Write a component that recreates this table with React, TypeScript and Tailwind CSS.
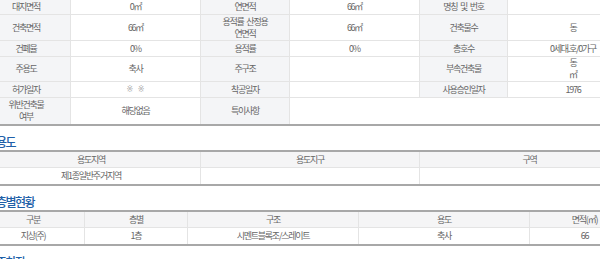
import type { ReactNode } from 'react'

const FONT = { fontFamily: '"Noto Sans CJK KR", "Noto Sans", sans-serif' }

function Th({ children, className = '' }: { children?: ReactNode; className?: string }) {
  return (
    <div
      className={`flex items-center justify-center border-r border-[#e4e4e4] bg-[#f4f5f7] text-center leading-[12px] ${className}`}
    >
      {children}
    </div>
  )
}

function Td({ children, className = '' }: { children?: ReactNode; className?: string }) {
  return (
    <div
      className={`flex items-center justify-center border-r border-[#e4e4e4] bg-white text-center leading-[12px] ${className}`}
    >
      {children}
    </div>
  )
}

function Heading({ title }: { title: string }) {
  return (
    <h3 className="h-[24px] pt-[9px] pl-[14px] text-[12px] leading-[14px] font-medium tracking-[-1.5px] text-[#2060a8]">
      {title}
    </h3>
  )
}

const rows: { h: string; cells: ReactNode[] }[] = [
  { h: 'h-[15px]', cells: ['대지면적', '0㎡', '연면적', '66㎡', '명칭 및 번호', ''] },
  {
    h: 'h-[26px]',
    cells: [
      '건축면적',
      '66㎡',
      <span key="a">
        용적률 산정용
        <br />
        연면적
      </span>,
      '66㎡',
      '건축물수',
      '동',
    ],
  },
  { h: 'h-[16px]', cells: ['건폐율', '0%', '용적률', '0%', '총호수', '0세대.호/0가구'] },
  {
    h: 'h-[25px]',
    cells: [
      '주용도',
      '축사',
      '주구조',
      '',
      '부속건축물',
      <span key="b">
        동
        <br />
        ㎡
      </span>,
    ],
  },
  {
    h: 'h-[16px]',
    cells: [
      '허가일자',
      <span key="c" className="font-['DejaVu_Sans'] text-[8px] tracking-normal text-[#b0b0b0]">
        ※ ※
      </span>,
      '착공일자',
      '',
      '사용승인일자',
      '1976',
    ],
  },
]

export default function App() {
  return (
    <div className="h-[259px] w-[600px] overflow-hidden bg-white" style={FONT}>
      <div className="-ml-[18px] w-[657px] text-[9px] tracking-[-1.25px] text-[#666] [word-spacing:2px]">
        {/* 기본 개요 */}
        <div className="border-b-2 border-[#a8a8a8]">
          {rows.map((r, i) => (
            <div
              key={i}
              className={`grid grid-cols-[89px_130px_89px_130px_88px_131px] border-b border-[#e4e4e4] ${r.h}`}
            >
              {r.cells.map((c, j) =>
                j % 2 === 0 ? <Th key={j}>{c}</Th> : <Td key={j}>{c}</Td>,
              )}
            </div>
          ))}
          <div className="grid h-[26px] grid-cols-[89px_130px_89px_349px]">
            <Th>
              <span>
                위반건축물
                <br />
                여부
              </span>
            </Th>
            <Td>해당없음</Td>
            <Th>특이사항</Th>
            <Td className="border-r-0" />
          </div>
        </div>

        <Heading title="용도" />
        <div className="border-y-2 border-[#a8a8a8]">
          <div className="grid h-[16px] grid-cols-3 border-b border-[#e4e4e4] bg-[#f5f5f6]">
            <Th className="bg-[#f5f5f6]">용도지역</Th>
            <Th className="bg-[#f5f5f6]">용도지구</Th>
            <Th className="border-r-0 bg-[#f5f5f6]">구역</Th>
          </div>
          <div className="grid h-[16px] grid-cols-3">
            <Td>제1종일반주거지역</Td>
            <Td />
            <Td className="border-r-0" />
          </div>
        </div>

        <Heading title="층별현황" />
        <div className="border-y-2 border-[#a8a8a8]">
          <div className="grid h-[16px] grid-cols-[103px_103px_171px_171px_109px] border-b border-[#e4e4e4]">
            <Th className="bg-[#f5f5f6]">구분</Th>
            <Th className="bg-[#f5f5f6]">층별</Th>
            <Th className="bg-[#f5f5f6]">구조</Th>
            <Th className="bg-[#f5f5f6]">용도</Th>
            <Th className="border-r-0 bg-[#f5f5f6]">면적(㎡)</Th>
          </div>
          <div className="grid h-[16px] grid-cols-[103px_103px_171px_171px_109px]">
            <Td>지상(주)</Td>
            <Td>1층</Td>
            <Td>시멘트블록조/스레이트</Td>
            <Td>축사</Td>
            <Td className="border-r-0">66</Td>
          </div>
        </div>

        <Heading title="주차장" />
      </div>
    </div>
  )
}
